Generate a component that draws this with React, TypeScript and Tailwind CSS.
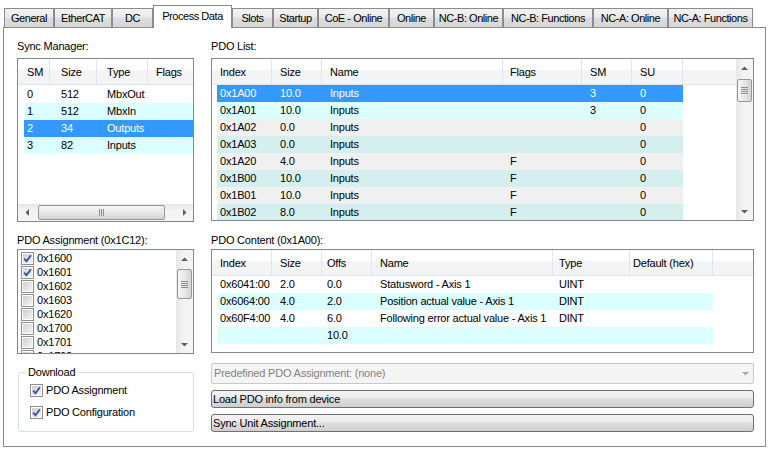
import React from 'react';

type Col = { label: string; w: string; pl: string };
type Row = { bg: string; cells: string[] };

const BG: Record<string, string> = {
  white: 'bg-white',
  cyan: 'bg-[#dcffff]',
  sel: 'bg-[#3399ff] text-white',
  gray: 'bg-[#f0f0f0]',
  teal: 'bg-[#d5eeee]',
};

const tabs = [
  { label: 'General', w: 'w-[50px]' },
  { label: 'EtherCAT', w: 'w-[58px]' },
  { label: 'DC', w: 'w-[41px]' },
  { label: 'Process Data', w: 'w-[79px]', active: true },
  { label: 'Slots', w: 'w-[41px]' },
  { label: 'Startup', w: 'w-[45px]' },
  { label: 'CoE - Online', w: 'w-[71px]' },
  { label: 'Online', w: 'w-[45px]' },
  { label: 'NC-B: Online', w: 'w-[69px]' },
  { label: 'NC-B: Functions', w: 'w-[90px]' },
  { label: 'NC-A: Online', w: 'w-[75px]' },
  { label: 'NC-A: Functions', w: 'w-[85px]' },
];

const smCols: Col[] = [
  { label: 'SM', w: 'w-[32px]', pl: 'pl-[9px]' },
  { label: 'Size', w: 'w-[47px]', pl: 'pl-[11px]' },
  { label: 'Type', w: 'w-[51px]', pl: 'pl-[10px]' },
  { label: 'Flags', w: 'w-[60px]', pl: 'pl-[8px]' },
];

const smRows: Row[] = [
  { bg: 'white', cells: ['0', '512', 'MbxOut', ''] },
  { bg: 'cyan', cells: ['1', '512', 'MbxIn', ''] },
  { bg: 'sel', cells: ['2', '34', 'Outputs', ''] },
  { bg: 'cyan', cells: ['3', '82', 'Inputs', ''] },
];

const pdoCols: Col[] = [
  { label: 'Index', w: 'w-[60px]', pl: 'pl-[8px]' },
  { label: 'Size', w: 'w-[50px]', pl: 'pl-[8px]' },
  { label: 'Name', w: 'w-[181px]', pl: 'pl-[8px]' },
  { label: 'Flags', w: 'w-[79px]', pl: 'pl-[7px]' },
  { label: 'SM', w: 'w-[50px]', pl: 'pl-[8px]' },
  { label: 'SU', w: 'w-[51px]', pl: 'pl-[8px]' },
];

const pdoRows: Row[] = [
  { bg: 'sel', cells: ['0x1A00', '10.0', 'Inputs', '', '3', '0'] },
  { bg: 'cyan', cells: ['0x1A01', '10.0', 'Inputs', '', '3', '0'] },
  { bg: 'gray', cells: ['0x1A02', '0.0', 'Inputs', '', '', '0'] },
  { bg: 'teal', cells: ['0x1A03', '0.0', 'Inputs', '', '', '0'] },
  { bg: 'gray', cells: ['0x1A20', '4.0', 'Inputs', 'F', '', '0'] },
  { bg: 'teal', cells: ['0x1B00', '10.0', 'Inputs', 'F', '', '0'] },
  { bg: 'gray', cells: ['0x1B01', '10.0', 'Inputs', 'F', '', '0'] },
  { bg: 'teal', cells: ['0x1B02', '8.0', 'Inputs', 'F', '', '0'] },
];

const contentCols: Col[] = [
  { label: 'Index', w: 'w-[60px]', pl: 'pl-[8px]' },
  { label: 'Size', w: 'w-[50px]', pl: 'pl-[8px]' },
  { label: 'Offs', w: 'w-[50px]', pl: 'pl-[5px]' },
  { label: 'Name', w: 'w-[181px]', pl: 'pl-[8px]' },
  { label: 'Type', w: 'w-[77px]', pl: 'pl-[6px]' },
  { label: 'Default (hex)', w: 'w-[83px]', pl: 'pl-[3px]' },
];

const contentRows: Row[] = [
  { bg: 'white', cells: ['0x6041:00', '2.0', '0.0', 'Statusword - Axis 1', 'UINT', ''] },
  { bg: 'cyan', cells: ['0x6064:00', '4.0', '2.0', 'Position actual value - Axis 1', 'DINT', ''] },
  { bg: 'white', cells: ['0x60F4:00', '4.0', '6.0', 'Following error actual value - Axis 1', 'DINT', ''] },
  { bg: 'cyan', cells: ['', '', '10.0', '', '', ''] },
];

const assignment = [
  { label: '0x1600', checked: true },
  { label: '0x1601', checked: true },
  { label: '0x1602' },
  { label: '0x1603' },
  { label: '0x1620' },
  { label: '0x1700' },
  { label: '0x1701' },
  { label: '0x1702' },
];

function Arrow({ dir }: { dir: 'up' | 'down' | 'left' | 'right' }) {
  const d = {
    up: 'M0 4 L3.5 0.5 L7 4 Z',
    down: 'M0 0 L3.5 3.5 L7 0 Z',
    left: 'M4 0 L0.5 3.5 L4 7 Z',
    right: 'M0 0 L3.5 3.5 L0 7 Z',
  }[dir];
  const vert = dir === 'up' || dir === 'down';
  return (
    <svg width={vert ? 7 : 4} height={vert ? 4 : 7} viewBox={vert ? '0 0 7 4' : '0 0 4 7'}>
      <path d={d} fill="#606060" />
    </svg>
  );
}

function VScroll({ gap, thumb }: { gap: string; thumb: string }) {
  return (
    <div className="flex w-[17px] shrink-0 flex-col bg-[linear-gradient(to_right,#e6e6e6,#f4f4f4_45%,#f4f4f4)]">
      <div className="flex h-[17px] shrink-0 items-center justify-center">
        <Arrow dir="up" />
      </div>
      <div className={gap} />
      <div
        className={`mx-px flex shrink-0 items-center justify-center rounded-[2px] border border-[#979797] bg-[linear-gradient(to_right,#f5f5f5,#e6e6e6_55%,#d2d2d2)] ${thumb}`}
      >
        <div className="flex flex-col gap-px">
          {[0, 1, 2, 3].map((i) => (
            <div key={i} className="h-px w-[7px] bg-[#8d8d8d]" />
          ))}
        </div>
      </div>
      <div className="flex-1" />
      <div className="flex h-[17px] shrink-0 items-center justify-center">
        <Arrow dir="down" />
      </div>
    </div>
  );
}

function HScroll() {
  return (
    <div className="flex h-[17px] shrink-0 bg-[linear-gradient(to_bottom,#e6e6e6,#f4f4f4_45%,#f4f4f4)]">
      <div className="flex w-[17px] shrink-0 items-center justify-center">
        <Arrow dir="left" />
      </div>
      <div className="w-[3px] shrink-0" />
      <div className="my-px flex w-[127px] shrink-0 items-center justify-center rounded-[2px] border border-[#979797] bg-[linear-gradient(to_bottom,#f5f5f5,#e6e6e6_55%,#d2d2d2)]">
        <div className="flex gap-px">
          {[0, 1, 2].map((i) => (
            <div key={i} className="h-[7px] w-px bg-[#8d8d8d]" />
          ))}
        </div>
      </div>
      <div className="flex-1" />
      <div className="flex w-[17px] shrink-0 items-center justify-center">
        <Arrow dir="right" />
      </div>
    </div>
  );
}

function Header({ cols }: { cols: Col[] }) {
  return (
    <div className="flex h-[26px] shrink-0 border-b border-[#e3e3e3] bg-[linear-gradient(to_bottom,#ffffff_0%,#ffffff_45%,#f3f4f6_45%,#f3f4f6_100%)]">
      {cols.map((c) => (
        <div
          key={c.label}
          className={`shrink-0 whitespace-nowrap border-r border-[#e3e5e9] pt-[7px] ${c.w} ${c.pl}`}
        >
          {c.label}
        </div>
      ))}
      <div className="flex-1" />
    </div>
  );
}

function Rows({ cols, rows, firstW, ml }: { cols: Col[]; rows: Row[]; firstW: string; ml: string }) {
  return (
    <div className="flex flex-col">
      {rows.map((r, ri) => (
        <div key={ri} className={`flex h-[17px] w-max shrink-0 leading-[17px] ${ml} ${BG[r.bg]}`}>
          {r.cells.map((cell, i) => (
            <div
              key={i}
              className={`shrink-0 overflow-hidden whitespace-nowrap ${i === 0 ? `${firstW} pl-[3px]` : `${cols[i].w} ${cols[i].pl}`}`}
            >
              {cell}
            </div>
          ))}
        </div>
      ))}
    </div>
  );
}

function CheckBox({ checked }: { checked?: boolean }) {
  return (
    <span className="flex h-[13px] w-[13px] shrink-0 border border-[#8e8f8f] bg-white p-px">
      <span className="flex h-full w-full items-center justify-center bg-[linear-gradient(135deg,#cfcfcf,#f4f4f4)]">
        {checked && (
          <svg width="9" height="9" viewBox="0 0 9 9">
            <path d="M1.2 4.6 L3.5 7.2 L7.9 1.2" stroke="#3a55a0" strokeWidth="1.9" fill="none" />
          </svg>
        )}
      </span>
    </span>
  );
}

function Label({ children, className = '' }: { children: React.ReactNode; className?: string }) {
  return <div className={`h-[13px] whitespace-nowrap leading-[13px] ${className}`}>{children}</div>;
}

export default function App() {
  return (
    <div className="h-[453px] w-[772px] overflow-hidden bg-white font-['Liberation_Sans',Arial,sans-serif] text-[11px] leading-[13px] tracking-[-0.2px] text-black">
      <div className="flex items-end pl-[4px] pt-[5px] tracking-[-0.45px]">
        {tabs.map((t) =>
          t.active ? (
            <div
              key={t.label}
              className={`relative z-10 -mb-px flex h-[23px] shrink-0 items-center justify-center whitespace-nowrap border border-b-0 border-[#898c95] bg-white pb-[2px] ${t.w}`}
            >
              {t.label}
            </div>
          ) : (
            <div
              key={t.label}
              className={`flex h-[19px] shrink-0 items-center justify-center whitespace-nowrap border border-b-0 border-[#898c95] bg-[linear-gradient(to_bottom,#f2f2f2,#ebebeb_45%,#dddddd_50%,#d6d6d6)] ${t.w}`}
            >
              {t.label}
            </div>
          ),
        )}
      </div>

      <div className="ml-[3px] h-[420px] w-[763px] border border-[#898c95] bg-white">
        <div className="flex gap-[17px] pl-[13px] pt-[12px]">
          {/* left column */}
          <div className="flex w-[177px] shrink-0 flex-col">
            <Label>Sync Manager:</Label>
            <div className="mt-[5px] flex h-[164px] flex-col overflow-hidden border border-[#828790]">
              <div className="flex flex-1 flex-col overflow-hidden">
                <Header cols={smCols} />
                <div className="h-px shrink-0" />
                <Rows cols={smCols} rows={smRows} firstW="w-[26px]" ml="ml-[6px]" />
              </div>
              <HScroll />
            </div>

            <Label className="mt-[12px]">PDO Assignment (0x1C12):</Label>
            <div className="mt-[2px] flex h-[105px] overflow-hidden border border-[#828790]">
              <div className="flex flex-1 flex-col overflow-hidden pl-[3px] pt-[1px]">
                {assignment.map((a) => (
                  <div key={a.label} className="flex h-[14px] shrink-0 items-center gap-[3px]">
                    <CheckBox checked={a.checked} />
                    <span className="leading-[14px]">{a.label}</span>
                  </div>
                ))}
              </div>
              <VScroll gap="h-[2px]" thumb="h-[30px]" />
            </div>

            <div className="relative ml-px mt-[18px] flex h-[60px] w-[176px] flex-col gap-[9px] rounded-[3px] border border-[#d5dfe5] pl-[11px] pt-[11px]">
              <span className="absolute -top-[7px] left-[7px] bg-white px-[2px] leading-[13px]">Download</span>
              <div className="flex h-[13px] items-center gap-[3px]">
                <CheckBox checked />
                <span>PDO Assignment</span>
              </div>
              <div className="flex h-[13px] items-center gap-[3px]">
                <CheckBox checked />
                <span>PDO Configuration</span>
              </div>
            </div>
          </div>

          {/* right column */}
          <div className="flex w-[543px] shrink-0 flex-col">
            <Label>PDO List:</Label>
            <div className="mt-[5px] flex h-[163px] overflow-hidden border border-[#828790]">
              <div className="flex flex-1 flex-col overflow-hidden">
                <Header cols={pdoCols} />
                <Rows cols={pdoCols} rows={pdoRows} firstW="w-[55px]" ml="ml-[5px]" />
              </div>
              <VScroll gap="h-[3px]" thumb="h-[23px]" />
            </div>

            <Label className="mt-[13px]">PDO Content (0x1A00):</Label>
            <div className="mt-[2px] flex h-[104px] flex-col overflow-hidden border border-[#828790]">
              <Header cols={contentCols} />
              <Rows cols={contentCols} rows={contentRows} firstW="w-[55px]" ml="ml-[5px]" />
            </div>

            <div className="mt-[10px] flex h-[21px] items-center justify-between rounded-[2px] border border-[#c9c9c9] bg-[#f4f4f4] pl-[2px] pr-[4px] text-[#838383]">
              <span>Predefined PDO Assignment: (none)</span>
              <svg width="7" height="4" viewBox="0 0 7 4">
                <path d="M0 0 L3.5 3.5 L7 0 Z" fill="#a8a8a8" />
              </svg>
            </div>
            <div className="mt-[6px] flex h-[18px] items-center rounded-[3px] border border-[#707070] bg-[linear-gradient(to_bottom,#f2f2f2,#ebebeb_45%,#dddddd_50%,#cfcfcf)] pl-px">
              Load PDO info from device
            </div>
            <div className="mt-[6px] flex h-[18px] items-center rounded-[3px] border border-[#707070] bg-[linear-gradient(to_bottom,#f2f2f2,#ebebeb_45%,#dddddd_50%,#cfcfcf)] pl-px">
              Sync Unit Assignment...
            </div>
          </div>
        </div>
      </div>
    </div>
  );
}
